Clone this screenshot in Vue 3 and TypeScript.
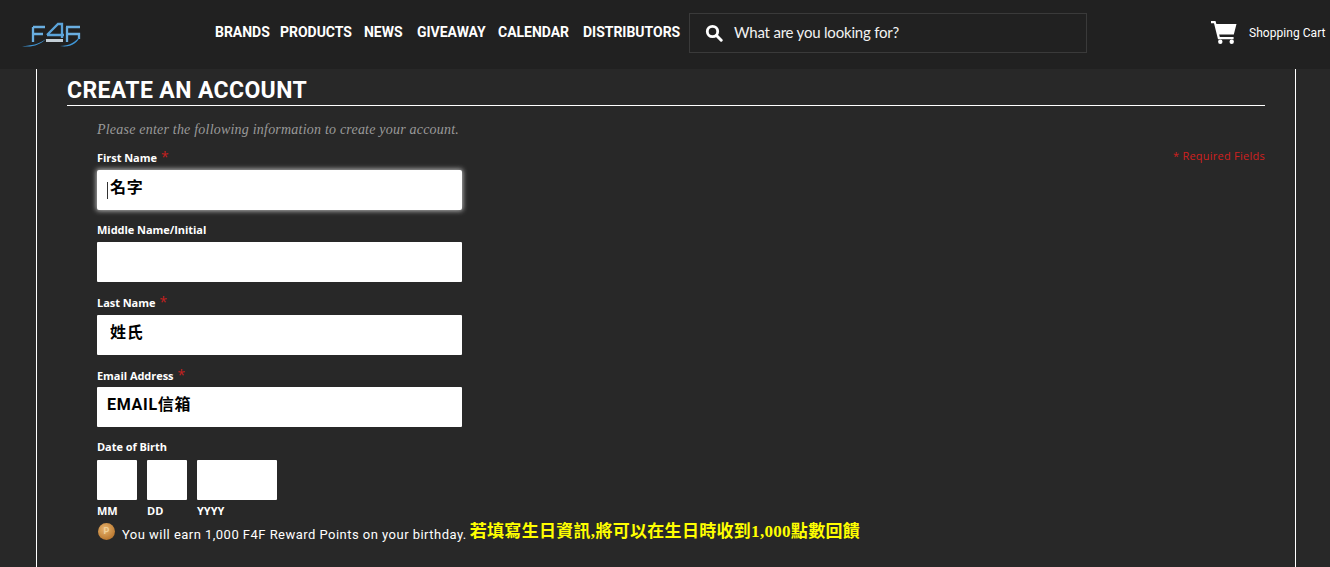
<script setup lang="ts">
interface Field { label: string; value: string; required: boolean; focused?: boolean; indented?: boolean }
const fields: Field[] = [
  { label: 'First Name', value: '名字', required: true, focused: true, indented: true },
  { label: 'Middle Name/Initial', value: '', required: false },
  { label: 'Last Name', value: '姓氏', required: true, indented: true },
  { label: 'Email Address', value: 'EMAIL信箱', required: true },
]
const nav = ['BRANDS', 'PRODUCTS', 'NEWS', 'GIVEAWAY', 'CALENDAR', 'DISTRIBUTORS']
const dob = [
  { label: 'MM', cls: 'short' },
  { label: 'DD', cls: 'short' },
  { label: 'YYYY', cls: 'long' },
]
</script>

<template>
  <div class="page">
    <header class="topbar">
      <svg class="logo" viewBox="0 0 60 30" width="60" height="30" aria-label="F4F logo">
        <path d="M11 8H23M11 8V23M11 15H21" fill="none" stroke="#6aaee0" stroke-width="2.3" />
        <path d="M25 16L36 5H40V19M25 16H42" fill="none" stroke="#5ba3d9" stroke-width="2.3" />
        <path d="M44 8H58M45 8V23M45 15H57V20" fill="none" stroke="#6aaee0" stroke-width="2.3" />
        <path d="M0 27C9 27 17 25 24 20C18 26 9 29 0 27Z" fill="#3f96d6" />
        <path d="M38 27C47 27 54 23 58 17C56 24 48 29 38 27Z" fill="#3f96d6" />
        <rect x="24" y="20" width="17" height="3" fill="#c3ced6" />
      </svg>
      <nav class="nav">
        <a v-for="item in nav" :key="item" class="nav-item">{{ item }}</a>
      </nav>
      <div class="search">
        <svg class="search-icon" viewBox="0 0 18 18" width="18" height="18">
          <circle cx="7.5" cy="7.5" r="5.2" fill="none" stroke="#fff" stroke-width="2.8" />
          <path d="M11.5 11.5L16.2 16.2" stroke="#fff" stroke-width="3" stroke-linecap="round" />
        </svg>
        <span class="search-text">What are you looking for?</span>
      </div>
      <div class="cart">
        <svg viewBox="0 0 26 24" width="26" height="24">
          <path d="M0 1H4.5L5.4 4H25.5L22.8 14.5H8.2L8.8 17H22.6V19.3H7L3 3.2H0Z" fill="#fff" />
          <circle cx="9.3" cy="21.7" r="2.2" fill="#fff" />
          <circle cx="20.7" cy="21.7" r="2.2" fill="#fff" />
        </svg>
        <span class="cart-text">Shopping Cart</span>
      </div>
    </header>

    <main class="content">
      <h1 class="title">CREATE AN ACCOUNT</h1>
      <div class="form-wrap">
        <p class="intro">Please enter the following information to create your account.</p>
        <div class="form-row">
          <form class="form" @submit.prevent>
            <div v-for="f in fields" :key="f.label" class="field">
              <label class="label">{{ f.label }}<span v-if="f.required" class="star">*</span></label>
              <div class="input-wrap">
                <input class="input" :class="{ focused: f.focused, indented: f.indented }" :value="f.value" type="text" />
                <span v-if="f.focused" class="caret"></span>
              </div>
            </div>
            <div class="field dob-field">
              <label class="label">Date of Birth</label>
              <div class="dob">
                <div v-for="d in dob" :key="d.label" class="dob-col">
                  <input class="input" :class="d.cls" type="text" />
                  <span class="dob-label">{{ d.label }}</span>
                </div>
              </div>
            </div>
            <div class="reward">
              <span class="coin">P</span>
              <span class="reward-text">You will earn 1,000 F4F Reward Points on your birthday.</span>
              <span class="note">若填寫生日資訊,將可以在生日時收到1,000點數回饋</span>
            </div>
          </form>
          <span class="required">* Required Fields</span>
        </div>
      </div>
    </main>
  </div>
</template>

<style>
html, body { margin: 0; background: #282828; }
</style>

<style scoped>
.page {
  width: 1330px;
  height: 567px;
  overflow: hidden;
  background: #282828;
  font-family: "Roboto", "Noto Sans CJK TC", sans-serif;
  color: #fff;
}
.topbar {
  height: 69px;
  background: #212121;
  display: flex;
  align-items: flex-start;
  box-sizing: border-box;
}
.logo { margin: 19px 0 0 22px; flex: none; }
.nav { display: flex; margin: 23px 0 0 133px; width: 474px; flex: none; }
.nav-item {
  font-size: 14px;
  line-height: 18px;
  font-weight: 700;
  white-space: nowrap;
  letter-spacing: -0.02px;
}
.nav-item:nth-child(1) { width: 65px; }
.nav-item:nth-child(2) { width: 84px; }
.nav-item:nth-child(3) { width: 53px; }
.nav-item:nth-child(4) { width: 81px; }
.nav-item:nth-child(5) { width: 85px; }
.search {
  width: 398px;
  height: 40px;
  margin-top: 13px;
  border: 1px solid #3a3a3a;
  box-sizing: border-box;
  display: flex;
  align-items: center;
  padding-left: 15px;
  flex: none;
}
.search-icon { flex: none; }
.search-text {
  margin-left: 11px;
  margin-top: -2px;
  font-family: "Lato", sans-serif;
  font-size: 15px;
  color: #f2f2f2;
  letter-spacing: -0.2px;
}
.cart { display: flex; align-items: center; margin: 20px 0 0 124px; flex: none; }
.cart-text { margin-left: 12px; font-size: 12px; font-weight: 400; white-space: nowrap; letter-spacing: 0.05px; padding-top: 2px; }
.content {
  width: 1260px;
  height: 498px;
  margin-left: 36px;
  box-sizing: border-box;
  border-left: 1px solid #fff;
  border-right: 1px solid #fff;
  padding: 0 30px;
}
.title {
  margin: 0;
  height: 36px;
  line-height: 44px;
  font-size: 23px;
  font-weight: 700;
  letter-spacing: 0.38px;
  border-bottom: 1px solid #fff;
  box-sizing: content-box;
  white-space: nowrap;
}
.form-wrap { padding-left: 30px; }
.intro {
  margin: 15px 0 8.75px;
  height: 18px;
  line-height: 18px;
  font-family: "Liberation Serif", serif;
  font-style: italic;
  font-size: 14px;
  letter-spacing: 0.21px;
  color: #9a9a9a;
}
.form-row { display: flex; justify-content: space-between; align-items: flex-start; }
.form { display: flex; flex-direction: column; }
.field { height: 72.5px; display: flex; flex-direction: column; width: 365px; }
.label {
  font-family: "Open Sans", sans-serif;
  font-size: 11px;
  font-weight: 700;
  line-height: 16px;
  height: 22px;
  padding-top: 1.5px;
  box-sizing: border-box;
  color: #fff;
  white-space: nowrap;
  letter-spacing: -0.05px;
}
.star { color: #c4201f; font-size: 14px; margin-left: 4px; font-weight: 400; }
.input-wrap { position: relative; width: 365px; height: 40px; }
.input {
  display: block;
  width: 365px;
  height: 40px;
  margin: 0;
  box-sizing: border-box;
  border: 0;
  border-radius: 1px;
  background: #fff;
  padding: 0 0 8px 10px;
  font-family: "Roboto", "Noto Sans CJK TC", sans-serif;
  font-size: 16px;
  font-weight: 700;
  color: #000;
  outline: none;
  letter-spacing: 0.7px;
}
.input.indented { padding-left: 13px; }
.input.focused { box-shadow: 0 0 5px 1px #b5b5b5; border-radius: 2px; }
.caret {
  position: absolute;
  left: 10px;
  top: 12px;
  width: 1px;
  height: 17px;
  background: #333;
}
.input.short { width: 40px; padding: 0; }
.input.long { width: 80px; padding: 0; }
.dob-field { height: auto; }
.dob { display: flex; gap: 10px; }
.dob-col { display: flex; flex-direction: column; }
.dob-label {
  font-family: "Open Sans", sans-serif;
  font-size: 11px;
  font-weight: 700;
  line-height: 20px;
  margin-top: 1px;
}
.reward { display: flex; align-items: center; height: 24px; white-space: nowrap; margin-top: 1px; }
.coin {
  width: 17px;
  height: 17px;
  border-radius: 50%;
  background: radial-gradient(circle at 40% 35%, #e9b56e, #b9772f 75%, #8a5620);
  color: #f0d09a;
  font-size: 9px;
  font-weight: 700;
  line-height: 17px;
  text-align: center;
  margin: -4px 7px 0 1px;
  flex: none;
}
.reward-text { font-size: 13px; letter-spacing: 0.47px; margin-top: 1px; }
.note {
  margin: -9px 0 0 3px;
  color: #ffff00;
  font-family: "Liberation Serif", "Noto Sans CJK TC", serif;
  font-size: 17px;
  font-weight: 700;
  letter-spacing: 0.3px;
}
.required {
  font-family: "Open Sans", sans-serif;
  font-size: 11px;
  line-height: 16px;
  color: #d0201f;
  letter-spacing: 0.25px;
}
</style>
